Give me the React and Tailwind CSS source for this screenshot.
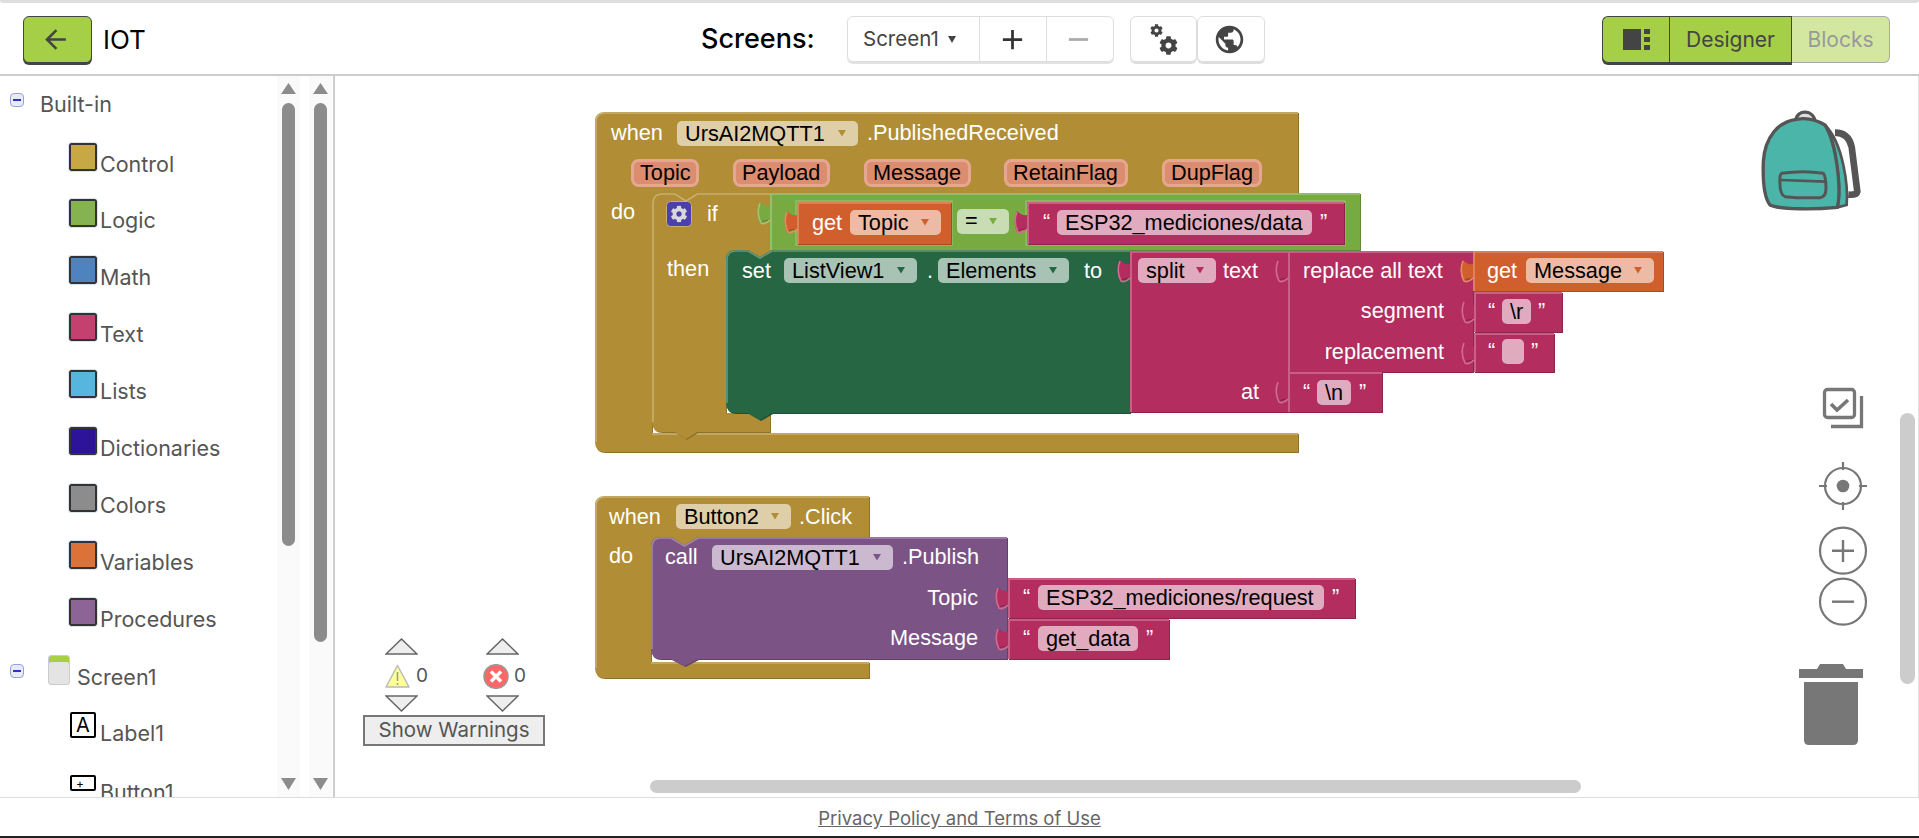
import { MdArrowBack, MdAdd, MdRemove, MdPublic } from "react-icons/md";
import { FaCog } from "react-icons/fa";

const gold = { fill: "fill-[#b18e35]", dark: "fill-[#8e722a]", light: "stroke-[#c9b06f]" };
const logic = { fill: "fill-[#77ab41]", dark: "fill-[#5f8934]", light: "stroke-[#9fc47a]" };
const orange = { fill: "fill-[#d05f2d]", dark: "fill-[#a64c24]", light: "stroke-[#e08c64]" };
const pink = { fill: "fill-[#b32d5e]", dark: "fill-[#8f244b]", light: "stroke-[#cf6d92]" };
const forest = { fill: "fill-[#266643]", dark: "fill-[#1e5236]", light: "stroke-[#679880]" };
const purple = { fill: "fill-[#7c5385]", dark: "fill-[#63426a]", light: "stroke-[#a387aa]" };

const categories = [
  { name: "Control", color: "bg-[#c8a845]" },
  { name: "Logic", color: "bg-[#85b34f]" },
  { name: "Math", color: "bg-[#4e83c0]" },
  { name: "Text", color: "bg-[#c4416f]" },
  { name: "Lists", color: "bg-[#56b6dd]" },
  { name: "Dictionaries", color: "bg-[#2d1399]" },
  { name: "Colors", color: "bg-[#8c8c8c]" },
  { name: "Variables", color: "bg-[#dc7238]" },
  { name: "Procedures", color: "bg-[#8c6496]" },
];

const Shape = ({ d, hl, c }) => (
  <>
    <path d={d} transform="translate(1,1)" className={c.dark} />
    <path d={d} className={c.fill} />
    <path d={hl} className={c.light} fill="none" strokeWidth="1.6" />
  </>
);

// value block with the puzzle tab on its left side
const Value = ({ x, y, w, h, c }) => (
  <Shape
    c={c}
    d={`M${x},${y} H${x + w} V${y + h} H${x} V${y + 27} Q${x - 6},${y + 26} ${x - 10},${y + 30} Q${x - 15},${y + 20} ${x - 10},${y + 9} Q${x - 6},${y + 14} ${x},${y + 13} V${y} Z`}
    hl={`M${x},${y + 27} Q${x - 5},${y + 32} ${x - 9},${y + 30} Q${x - 14},${y + 20} ${x - 10},${y + 10} M${x + 1},${y + h} V${y + 1} H${x + w}`}
  />
);

const Label = ({ x, y, end, children, className = "fill-white" }) => (
  <text x={x} y={y} textAnchor={end ? "end" : "start"} className={className}>
    {children}
  </text>
);

const Field = ({ x, y, w, text, bg, caret }) => (
  <>
    <rect x={x} y={y} width={w} height="25" rx="5" className={bg} />
    {text && (
      <text x={x + 8} y={y + 19.6} className="fill-black">
        {text}
      </text>
    )}
    {caret && <path d={`M${x + w - 20},${y + 9} h8 l-4,6.5 Z`} className={caret} />}
  </>
);

const Str = ({ x, y, w, text, q1, q2 }) => (
  <>
    <Label x={q1} y={y + 19}>“</Label>
    <Field x={x} y={y} w={w} text={text} bg="fill-[#e0abbf]" />
    <Label x={q2} y={y + 19}>”</Label>
  </>
);

const Param = ({ x, w, text }) => (
  <>
    <rect x={x + 1.5} y="160.5" width={w - 3} height="25" rx="6" strokeWidth="3" className="fill-[#dc8d6f] stroke-[#e5a78f]" />
    <text x={x + 9} y="180" className="fill-black">{text}</text>
  </>
);

const Blocks = () => (
  <svg
    viewBox="335 76 1583 721"
    width="1583"
    height="721"
    className="absolute left-0 top-0 font-['Liberation_Sans',sans-serif] text-[21.7px]"
  >
    {/* when UrsAI2MQTT1.PublishedReceived */}
    <Shape
      c={gold}
      d="M605,112 H1298 V193 H697 l-11,7 -11,-7 H662 Q652,193 652,203 V433 H1298 V452 H605 Q595,452 595,442 V122 Q595,112 605,112 Z"
      hl="M596,442 V122 Q596,113 605,113 H1298 M1298,434 H652"
    />
    <Label x={611} y={140}>when</Label>
    <Field x={677} y={121} w={181} text="UrsAI2MQTT1" bg="fill-[#dfcfa9]" caret="fill-[#b18e35]" />
    <Label x={867} y={140}>.PublishedReceived</Label>
    <Param x={631} w={68} text="Topic" />
    <Param x={733} w={97} text="Payload" />
    <Param x={864} w={107} text="Message" />
    <Param x={1004} w={124} text="RetainFlag" />
    <Param x={1162} w={100} text="DupFlag" />
    <Label x={611} y={219}>do</Label>

    {/* if */}
    <Shape
      c={gold}
      d="M662,193 H675 l11,7 11,-7 H770 V250 H772 l-12,7 -12,-7 H736 Q726,250 726,260 V413 H770 V432 H697 l-11,7 -11,-7 H662 Q652,432 652,422 V203 Q652,193 662,193 Z"
      hl="M653,422 V203 Q653,194 662,194 H675 l11,7 11,-7 H770"
    />
    <rect x="666.5" y="201.5" width="25" height="25" rx="4" className="fill-[#4c3fae] stroke-[#c9b06f]" />
    <FaCog x={670.5} y={205.5} size={17} color="#d8d8d8" />
    <Label x={707} y={221}>if</Label>
    <Label x={667} y={276}>then</Label>

    {/* Topic = "ESP32_mediciones/data" */}
    <Value x={770} y={193} w={590} h={57} c={logic} />
    <rect x="796" y="201" width="156" height="44" fill="none" className="stroke-[#9fc47a]" />
    <rect x="1026" y="201" width="319" height="44" fill="none" className="stroke-[#9fc47a]" />
    <Value x={797} y={202} w={154} h={42} c={orange} />
    <Label x={812} y={230}>get</Label>
    <Field x={850} y={210} w={91} text="Topic" bg="fill-[#ecbaa5]" caret="fill-[#d05f2d]" />
    <Field x={957} y={209} w={52} bg="fill-[#c8ddb3]" caret="fill-[#77ab41]" />
    <text x={965} y={228} className="fill-black">=</text>
    <Value x={1027} y={202} w={317} h={42} c={pink} />
    <Str x={1057} y={210} w={255} text="ESP32_mediciones/data" q1={1043} q2={1320} />

    {/* set ListView1.Elements */}
    <Shape
      c={forest}
      d="M736,250 H748 l12,7 12,-7 H1130 V413 H772 l-12,7 -12,-7 H736 Q726,413 726,403 V260 Q726,250 736,250 Z"
      hl="M727,403 V260 Q727,251 736,251 H748 l12,7 12,-7 H1130"
    />
    <Label x={742} y={278}>set</Label>
    <Field x={784} y={258} w={133} text="ListView1" bg="fill-[#a8c2b3]" caret="fill-[#266643]" />
    <Label x={927} y={278}>.</Label>
    <Field x={938} y={258} w={131} text="Elements" bg="fill-[#a8c2b3]" caret="fill-[#266643]" />
    <Label x={1084} y={278}>to</Label>

    {/* split text at */}
    <Value x={1130} y={251} w={158} h={161} c={pink} />
    <Field x={1138} y={258} w={78} text="split" bg="fill-[#e0abbf]" caret="fill-[#b32d5e]" />
    <Label x={1223} y={278}>text</Label>
    <Label x={1259} y={399} end>at</Label>

    {/* replace all text */}
    <Value x={1288} y={251} w={185} h={121} c={pink} />
    <Label x={1303} y={278}>replace all text</Label>
    <Label x={1444} y={318} end>segment</Label>
    <Label x={1444} y={359} end>replacement</Label>

    <Value x={1473} y={251} w={190} h={40} c={orange} />
    <Label x={1487} y={278}>get</Label>
    <Field x={1526} y={258} w={128} text="Message" bg="fill-[#ecbaa5]" caret="fill-[#d05f2d]" />

    <Value x={1474} y={292} w={88} h={40} c={pink} />
    <Str x={1502} y={299} w={29} text="\r" q1={1488} q2={1538} />
    <Value x={1474} y={333} w={80} h={39} c={pink} />
    <Str x={1502} y={339} w={22} text="" q1={1488} q2={1531} />
    <Value x={1288} y={372} w={94} h={40} c={pink} />
    <Str x={1317} y={380} w={34} text="\n" q1={1303} q2={1359} />

    {/* when Button2.Click */}
    <Shape
      c={gold}
      d="M605,496 H869 V537 H698 l-13.5,8 -13.5,-8 H661 Q651,537 651,547 V662 H869 V678 H605 Q595,678 595,668 V506 Q595,496 605,496 Z"
      hl="M596,668 V506 Q596,497 605,497 H869 M869,663 H651"
    />
    <Label x={609} y={524}>when</Label>
    <Field x={676} y={504} w={115} text="Button2" bg="fill-[#dfcfa9]" caret="fill-[#b18e35]" />
    <Label x={799} y={524}>.Click</Label>
    <Label x={609} y={563}>do</Label>

    <Shape
      c={purple}
      d="M661,537 H671 l13.5,8 13.5,-8 H1007 V659 H698 l-13.5,7 -13.5,-7 H661 Q651,659 651,649 V547 Q651,537 661,537 Z"
      hl="M652,649 V547 Q652,538 661,538 H671 l13.5,8 13.5,-8 H1007"
    />
    <Label x={665} y={564}>call</Label>
    <Field x={712} y={545} w={181} text="UrsAI2MQTT1" bg="fill-[#cbbacf]" caret="fill-[#7c5385]" />
    <Label x={902} y={564}>.Publish</Label>
    <Label x={978} y={605} end>Topic</Label>
    <Label x={978} y={645} end>Message</Label>

    <Value x={1008} y={578} w={347} h={40} c={pink} />
    <Str x={1038} y={585} w={286} text="ESP32_mediciones/request" q1={1023} q2={1332} />
    <Value x={1008} y={619} w={161} h={40} c={pink} />
    <Str x={1038} y={626} w={100} text="get_data" q1={1023} q2={1146} />

    {/* backpack */}
    <g transform="translate(1700,90) scale(0.3333)">
      <path d="M405,128 Q445,128 455,170 L472,305 Q470,316 445,314" fill="none" stroke="#555" strokeWidth="20" />
      <path d="M288,90 C290,58 342,58 345,95 Z" fill="#ddd" stroke="#555" strokeWidth="10" />
      <path d="M375,105 C410,160 425,300 412,352 L440,345 C445,290 430,160 375,105 Z" fill="#4bb5a9" stroke="#555" strokeWidth="8" />
      <path d="M290,88 C235,95 195,140 190,215 C188,270 190,320 210,345 C240,360 350,358 412,352 C425,300 410,160 375,105 C350,90 320,82 290,88 Z" fill="#4bb5a9" stroke="#555" strokeWidth="10" />
      <path d="M245,250 Q310,240 370,250 Q378,260 378,295 Q378,322 360,323 Q300,325 255,320 Q240,315 240,280 Q238,255 245,250 Z" fill="none" stroke="#555" strokeWidth="9" />
      <path d="M240,270 L378,275" stroke="#555" strokeWidth="8" />
    </g>

    {/* workspace controls */}
    <g fill="none" stroke="#777" strokeWidth="3.3">
      <rect x="1824.5" y="389.5" width="30" height="28" rx="3" />
      <path d="M1861.5,396 V426.5 H1831" />
      <path d="M1831,404 l6,6 l11,-10" strokeWidth="3.6" />
      <circle cx="1843" cy="486" r="18" strokeWidth="2.2" />
      <path d="M1843,462 v8 M1843,502 v8 M1819,486 h8 M1859,486 h8" strokeWidth="2.2" />
      <circle cx="1843" cy="550.7" r="23" strokeWidth="2.2" />
      <path d="M1832,550.7 h22 M1843,540 v22" strokeWidth="2.4" />
      <circle cx="1843" cy="601.7" r="23" strokeWidth="2.2" />
      <path d="M1832,601.7 h22" strokeWidth="2.4" />
    </g>
    <circle cx="1843" cy="486" r="6.3" fill="#777" />
    <path d="M1799,669 H1817 L1820,664 H1843 L1846,669 H1863 V678 H1799 Z" fill="#777" />
    <path d="M1804,682 H1858 V740 Q1858,745 1853,745 H1809 Q1804,745 1804,740 Z" fill="#777" />
  </svg>
);

const Triangle = ({ down }) => (
  <svg width="33" height="17" viewBox="0 0 33 17" className="block">
    <path
      d={down ? "M1,1 H32 L16.5,16 Z" : "M1,16 H32 L16.5,1 Z"}
      fill="#eee"
      stroke="#666"
      strokeWidth="1.5"
    />
  </svg>
);

const WarningPanel = () => (
  <div className="absolute left-[28px] top-[562px] flex w-[182px] flex-col text-[#555]">
    <div className="flex">
      <div className="flex w-[120px] flex-col pl-[22px]">
        <Triangle />
        <div className="my-[8px] flex h-[24px] items-center gap-[6px] pt-[2px] text-[19px]">
          <svg width="25" height="24" viewBox="0 0 25 24">
            <path d="M12.5,1.5 L24,23 H1 Z" fill="#ffff99" stroke="#bbb" strokeWidth="1.5" strokeLinejoin="round" />
            <path d="M12.5,8 V17 M12.5,19 V21" stroke="#999" strokeWidth="1.5" />
          </svg>
          <span>0</span>
        </div>
        <Triangle down />
      </div>
      <div className="flex flex-col">
        <div className="ml-[3px]">
          <Triangle />
        </div>
        <div className="my-[8px] flex h-[24px] items-center gap-[5px] pt-[2px] text-[19px]">
          <svg width="26" height="25" viewBox="0 0 26 25">
            <ellipse cx="13" cy="12.5" rx="12" ry="11.8" fill="#f66" stroke="#999" strokeWidth="1.5" />
            <path d="M8,7.5 L18,17.5 M18,7.5 L8,17.5" stroke="#fff" strokeWidth="3.4" />
          </svg>
          <span>0</span>
        </div>
        <div className="ml-[3px]">
          <Triangle down />
        </div>
      </div>
    </div>
    <button className="mt-[3px] h-[31px] w-[182px] border-2 border-[#777] bg-[#eee] text-[20.5px] leading-none text-[#555]">
      Show Warnings
    </button>
  </div>
);

const Scrollbar = ({ thumb }) => (
  <div className="flex w-[23px] flex-col items-center bg-[#fafafa] pt-[7px]">
    <svg width="15" height="11" viewBox="0 0 15 11" className="block">
      <path d="M7.5,0 L15,11 H0 Z" fill="#8c8c8c" />
    </svg>
    <div className={`mt-[9px] w-[13px] rounded-full bg-[#8c8c8c] ${thumb}`} />
    <svg width="15" height="12" viewBox="0 0 15 12" className="mt-auto mb-[7px] block">
      <path d="M0,0 H15 L7.5,12 Z" fill="#8c8c8c" />
    </svg>
  </div>
);

const MinusBox = () => (
  <div className="flex h-[14px] w-[14px] items-center justify-center rounded-[4px] border border-[#99a3d6] bg-[#e8eaf6]">
    <div className="h-[2px] w-[8px] bg-[#2a35c0]" />
  </div>
);

const Sidebar = () => (
  <div className="flex w-[333px] shrink-0">
    <div className="w-[277px] shrink-0 overflow-hidden text-[21.5px] text-[#555]">
      <div className="flex h-[66.5px] items-start pt-[17px] pl-[10px]">
        <MinusBox />
        <span className="ml-[16px] mt-[-5px]">Built-in</span>
      </div>
      {categories.map((cat) => (
        <div key={cat.name} className="flex h-[56.9px] items-start pl-[69px]">
          <div className={`h-[28px] w-[28px] rounded-[2px] border-2 border-[#333] outline outline-[#dbe4f0] ${cat.color}`} />
          <span className="ml-[3px] mt-[8px] leading-[26px]">{cat.name}</span>
        </div>
      ))}
      <div className="flex h-[57px] items-start pl-[10px]">
        <div className="mt-[9px]">
          <MinusBox />
        </div>
        <div className="ml-[24px] h-[30px] w-[22px] rounded-[3px] border border-[#ccc] bg-[#e4e4e4] shadow-[inset_0_6px_0_#a9cf45]" />
        <span className="ml-[7px] mt-[9px] leading-[26px]">Screen1</span>
      </div>
      <div className="flex h-[63px] items-start pl-[70px]">
        <div className="flex h-[26px] w-[26px] items-center justify-center rounded-[2px] border-2 border-black text-[20px] leading-none text-black">
          A
        </div>
        <span className="ml-[4px] mt-[8px] leading-[26px]">Label1</span>
      </div>
      <div className="flex items-start pl-[70px]">
        <div className="relative h-[16px] w-[26px] rounded-[2px] border-2 border-black">
          <div className="ml-[4px] mt-[2px] text-[12px] leading-[9px] text-black">+</div>
        </div>
        <span className="ml-[4px] mt-[4px] leading-[26px]">Button1</span>
      </div>
    </div>
    <Scrollbar thumb="h-[443px]" />
    <div className="w-[9px]" />
    <Scrollbar thumb="h-[539px]" />
  </div>
);

const App = () => {
  return (
    <div className="flex h-[838px] w-[1919px] flex-col overflow-hidden bg-white font-[Inter,sans-serif]">
      <div className="h-[3px] shrink-0 rounded-b-[4px] bg-[#dedede]" />

      {/* Header */}
      <div className="flex h-[73px] shrink-0 items-start border-b-2 border-[#ccc] pt-[13px]">
        <div className="flex w-[701px] shrink-0 items-center pl-[23px]">
          <button className="flex h-[47px] w-[69px] items-center justify-center rounded-[6px] border border-[#444] bg-[#a5cf47] pr-[4px] shadow-[0_2px_0_#444]">
            <MdArrowBack size={31} color="#444" />
          </button>
          <span className="ml-[11px] text-[26px] text-black">IOT</span>
        </div>

        <span className="flex h-[47px] w-[146px] shrink-0 items-center text-[27px] font-medium text-black">
          Screens:
        </span>
        <div className="flex h-[46px] w-[267px] rounded-[6px] border border-[#ddd] shadow-[0_2px_0_#e2e2e2]">
          <div className="flex w-[132px] items-center border-r border-[#ddd] pl-[15px] text-[20.5px] text-[#444]">
            Screen1
            <span className="ml-[9px] h-0 w-0 border-x-[4px] border-t-[7px] border-x-transparent border-t-[#444]" />
          </div>
          <div className="flex w-[67px] items-center justify-center border-r border-[#ddd] pr-[2px]">
            <MdAdd size={33} color="#333" />
          </div>
          <div className="flex flex-1 items-center justify-center pr-[3px]">
            <MdRemove size={33} color="#aaa" />
          </div>
        </div>
        <div className="ml-[16px] flex h-[46px] w-[67px] items-center justify-center rounded-[6px] border border-[#ddd] shadow-[0_2px_0_#ddd]">
          <div className="relative h-[31px] w-[28px]">
            <FaCog size={13} color="#444" className="absolute left-0 top-0" />
            <FaCog size={19} color="#444" className="absolute bottom-0 right-0" />
          </div>
        </div>
        <div className="flex h-[46px] w-[68px] items-center justify-center rounded-[6px] border border-[#ddd] pr-[3px] shadow-[0_2px_0_#ddd]">
          <MdPublic size={33} color="#444" />
        </div>

        <div className="ml-auto mr-[29px] flex h-[47px]">
          <div className="flex w-[67px] items-center justify-center gap-[3px] rounded-l-[6px] border border-r-0 border-[#444] bg-[#a5cf47] shadow-[0_2px_0_#444]">
            <svg width="27" height="21" viewBox="0 0 27 21">
              <path d="M0,0 H18 V21 H0 Z M21,0 H27 V5 H21 Z M21,8 H27 V13 H21 Z M21,16 H27 V21 H21 Z" fill="#444" />
            </svg>
          </div>
          <div className="flex w-[123px] items-center justify-center border border-[#444] bg-[#a5cf47] text-[21px] text-[#444] shadow-[0_2px_0_#444]">
            Designer
          </div>
          <div className="flex w-[98px] items-center justify-center rounded-r-[6px] border border-l-0 border-[#aaa] bg-[#d4e7a0] text-[21px] text-[#999]">
            Blocks
          </div>
        </div>
      </div>

      {/* Main */}
      <div className="flex min-h-0 flex-1">
        <Sidebar />
        <div className="w-[2px] shrink-0 bg-[#ccc]" />
        <div className="relative flex-1 overflow-hidden border-r border-[#e2e2e2]">
          <Blocks />
          <WarningPanel />
          <div className="absolute left-[315px] top-[704px] h-[13px] w-[931px] rounded-full bg-[#ccc]" />
          <div className="absolute left-[1565px] top-[337px] h-[271px] w-[15px] rounded-full bg-[#ccc]" />
        </div>
      </div>

      {/* Footer */}
      <div className="flex h-[41px] shrink-0 items-start justify-center border-t border-[#ddd] border-b-2 border-b-[#222] bg-white">
        <a className="mt-[9px] text-[18.5px] leading-[22px] text-[#666] underline">
          Privacy Policy and Terms of Use
        </a>
      </div>
    </div>
  );
};

export default App;
